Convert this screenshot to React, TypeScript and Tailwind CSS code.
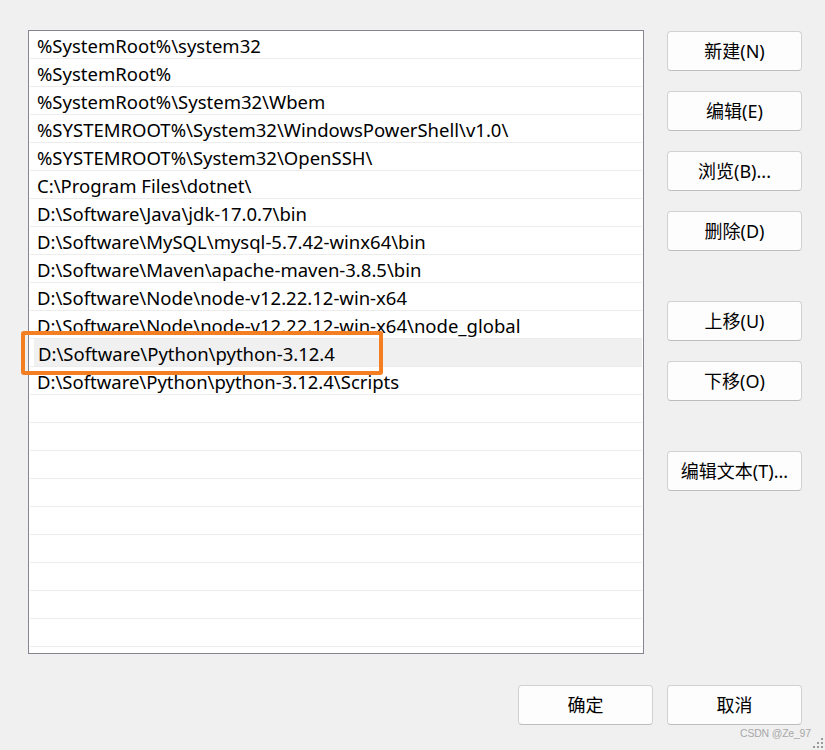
import React from "react";

const rows = [
  "%SystemRoot%\\system32",
  "%SystemRoot%",
  "%SystemRoot%\\System32\\Wbem",
  "%SYSTEMROOT%\\System32\\WindowsPowerShell\\v1.0\\",
  "%SYSTEMROOT%\\System32\\OpenSSH\\",
  "C:\\Program Files\\dotnet\\",
  "D:\\Software\\Java\\jdk-17.0.7\\bin",
  "D:\\Software\\MySQL\\mysql-5.7.42-winx64\\bin",
  "D:\\Software\\Maven\\apache-maven-3.8.5\\bin",
  "D:\\Software\\Node\\node-v12.22.12-win-x64",
  "D:\\Software\\Node\\node-v12.22.12-win-x64\\node_global",
  "D:\\Software\\Python\\python-3.12.4",
  "D:\\Software\\Python\\python-3.12.4\\Scripts",
];

const FONT = { fontFamily: '"Noto Sans", "Noto Sans CJK SC", sans-serif' };

function Btn({ label, className = "" }: { label: string; className?: string }) {
  return (
    <div
      className={
        "w-[135px] h-[40px] flex items-center justify-center bg-[#fdfdfd] border border-[#d1d1d1] border-b-[#bdbdbd] rounded-[4px] text-[18px] text-black " +
        className
      }
    >
      {label}
    </div>
  );
}

export default function App() {
  const total = 22;
  const list = Array.from({ length: total }, (_, i) => rows[i] ?? "");
  return (
    <div
      className="relative w-[825px] h-[750px] bg-[#f0f0f0] overflow-hidden"
      style={FONT}
    >
      <div className="flex pt-[30px] pl-[28px]">
        <div className="relative w-[616px] h-[624px] border border-[#868690] bg-white pl-[1px] pr-[1px]">
          {list.map((t, i) => (
            <div
              key={i}
              className="h-[28px] border-b border-[#ececec] flex"
            >
              <div
                className={
                  "flex-1 flex items-center pt-[3px] text-[18.5px] text-black whitespace-nowrap leading-none " +
                  (i === 11 ? "bg-[#f0f0f0] ml-[4px] pl-[4px]" : "pl-[7px]")
                }
              >
                {t}
              </div>
            </div>
          ))}
        </div>
        <div className="ml-[23px] mt-[1px] flex flex-col">
          <Btn label="新建(N)" />
          <Btn label="编辑(E)" className="mt-[20px]" />
          <Btn label="浏览(B)..." className="mt-[20px]" />
          <Btn label="删除(D)" className="mt-[20px]" />
          <Btn label="上移(U)" className="mt-[50px]" />
          <Btn label="下移(O)" className="mt-[20px]" />
          <Btn label="编辑文本(T)..." className="mt-[50px]" />
        </div>
      </div>
      <div className="flex justify-end gap-[14px] pr-[23px] mt-[31px]">
        <Btn label="确定" />
        <Btn label="取消" />
      </div>

      {/* annotation box */}
      <div className="absolute left-[21px] top-[331px] w-[362px] h-[44px] border-[4px] border-[#f47e22] rounded-[3px]" />

      {/* watermark */}
      <div
        className="absolute left-[740px] top-[728px] text-[10.5px] text-[#a8a8a8] leading-none tracking-[-0.2px]"
        style={{ fontFamily: '"Liberation Sans", Arial, sans-serif' }}
      >
        CSDN @Ze_97
      </div>
      {/* resize grip */}
      <svg className="absolute right-[1px] bottom-[1px]" width="12" height="12" viewBox="0 0 12 12">
        {[
          [10, 2], [10, 6], [6, 6], [10, 10], [6, 10], [2, 10],
        ].map(([x, y], i) => (
          <rect key={i} x={x - 1} y={y - 1} width="2" height="2" fill="#9a9a9a" />
        ))}
      </svg>
    </div>
  );
}
